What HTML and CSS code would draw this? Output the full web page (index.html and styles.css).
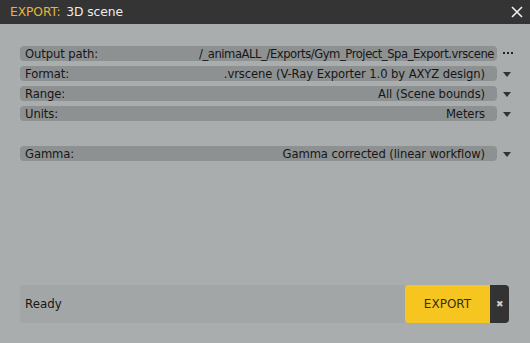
FILE: index.html
```html
<!DOCTYPE html>
<html lang="en">
<head>
  <meta charset="UTF-8" />
  <title>Export</title>
  <link rel="stylesheet" href="styles.css">
</head>
<body>
  <div class="window">

    <!-- Title bar -->
    <div class="titlebar">
      <div class="title"><span class="title-tag">EXPORT:</span> 3D scene</div>
      <svg class="title-close" width="12" height="12" viewBox="0 0 12 12">
        <path d="M1 1 L11 11 M11 1 L1 11" stroke="#eeeeee" stroke-width="1.6" fill="none"/>
      </svg>
    </div>

    <!-- Settings -->
    <div class="settings">
      <div class="group">
        <div class="row">
          <div class="field field-path"><span class="label">Output path:</span><span class="value value-path">/_animaALL_/Exports/Gym_Project_Spa_Export.vrscene</span></div>
          <div class="icon"><span class="dots"><i></i><i></i><i></i></span></div>
        </div>
        <div class="row">
          <div class="field"><span class="label">Format:</span><span class="value">.vrscene (V-Ray Exporter 1.0 by AXYZ design)</span></div>
          <div class="icon"><span class="arrow"></span></div>
        </div>
        <div class="row">
          <div class="field"><span class="label">Range:</span><span class="value">All (Scene bounds)</span></div>
          <div class="icon"><span class="arrow"></span></div>
        </div>
        <div class="row">
          <div class="field"><span class="label">Units:</span><span class="value">Meters</span></div>
          <div class="icon"><span class="arrow"></span></div>
        </div>
      </div>

      <div class="group">
        <div class="row">
          <div class="field"><span class="label">Gamma:</span><span class="value">Gamma corrected (linear workflow)</span></div>
          <div class="icon"><span class="arrow"></span></div>
        </div>
      </div>
    </div>

    <!-- Footer -->
    <div class="footer">
      <div class="status">Ready</div>
      <button class="btn-export">EXPORT</button>
      <button class="btn-cancel">&#x2716;</button>
    </div>

  </div>
</body>
</html>
```

FILE: styles.css
```css
/* General */
body {
  margin: 0;
  padding: 0;
  background-color: #a9adad;
  font-family: "DejaVu Sans", Verdana, sans-serif;
  color: #161616;
}

.window {
  width: 530px;
  height: 343px;
  display: flex;
  flex-direction: column;
}

/* Title bar */
.titlebar {
  height: 24px;
  background-color: #343434;
  display: flex;
  align-items: center;
  justify-content: space-between;
  padding: 0 7px 0 10px;
}
.title {
  color: #ececec;
  font-size: 12.3px;
  letter-spacing: -0.1px;
}
.title-tag {
  color: #e3b53a;
  margin-right: 2px;
}
.title-close {
  display: block;
}

/* Settings rows */
.settings {
  padding: 22px 13px 0 20px;
  display: flex;
  flex-direction: column;
  gap: 25px;
}
.group {
  display: flex;
  flex-direction: column;
  gap: 5px;
}
.row {
  display: flex;
  height: 15px;
}
.field {
  flex: 1;
  background-color: #8e9192;
  border-radius: 4px;
  display: flex;
  justify-content: space-between;
  align-items: center;
  padding: 0 12px 0 5px;
  font-size: 11.6px;
  letter-spacing: -0.1px;
  white-space: nowrap;
  overflow: hidden;
}
.field-path {
  padding-right: 3px;
}
.value-path {
  letter-spacing: -0.45px;
}
.icon {
  width: 20px;
  display: flex;
  align-items: center;
  justify-content: center;
}
.arrow {
  width: 0;
  height: 0;
  border-left: 4px solid transparent;
  border-right: 4px solid transparent;
  border-top: 5px solid #333;
  margin-top: 2px;
}
.dots {
  display: flex;
  gap: 2px;
  margin-left: 2px;
  margin-top: -2px;
}
.dots i {
  width: 2px;
  height: 2px;
  background-color: #222;
}

/* Footer */
.footer {
  margin-top: auto;
  margin-bottom: 20px;
  margin-left: 20px;
  margin-right: 21px;
  height: 38px;
  display: flex;
}
.status {
  flex: 1;
  background-color: #a2a6a7;
  display: flex;
  align-items: center;
  padding-left: 5px;
  font-size: 11.8px;
}
.btn-export {
  width: 85px;
  border: none;
  background-color: #f7c51f;
  color: #3a2f0f;
  font-family: "DejaVu Sans", Verdana, sans-serif;
  font-size: 12px;
  border-radius: 4px 0 0 4px;
  padding: 0;
}
.btn-cancel {
  width: 19px;
  border: none;
  background-color: #333333;
  color: #cfcfcf;
  font-size: 9px;
  border-radius: 0 4px 4px 0;
  padding: 0;
}
```
